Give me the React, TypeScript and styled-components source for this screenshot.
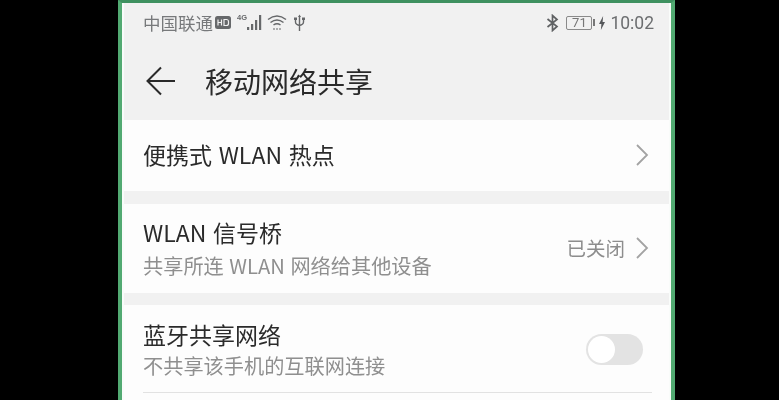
import styled, { createGlobalStyle } from "styled-components";

const GlobalStyle = createGlobalStyle`
    html, body {
        margin: 0;
        height: 100%;
        background: #000;
        overflow: hidden;
    }
`;

const Page = styled.div`
    width: 779px;
    height: 400px;
    overflow: hidden;
    background: #000;
    padding-left: 118px;
    box-sizing: border-box;
    font-family: "Noto Sans CJK SC", "Liberation Sans", sans-serif;
`;

const Phone = styled.div`
    width: 557px;
    height: 420px;
    box-sizing: border-box;
    border: solid #52aa72;
    border-top-color: #3f9160;
    border-width: 3px 4px 0 4px;
    display: flex;
    filter: blur(0.45px);
`;

const Screen = styled.div`
    flex: 1;
    min-width: 0;
    background: #f1f1f1;
    border: solid #f9fcfa;
    border-width: 0 2px;
    display: flex;
    flex-direction: column;
`;

const StatusBar = styled.div`
    height: 39px;
    padding: 0 15px 0 19px;
    display: flex;
    align-items: center;
    justify-content: space-between;
    color: #77797b;
    font-size: 17.5px;
`;

const StatusGroup = styled.div<{ $gap: number }>`
    display: flex;
    align-items: center;
    gap: ${(p) => p.$gap}px;
`;

const Carrier = styled.span`
    margin-right: -3px;
`;

const Clock = styled.span`
    font-family: "Roboto", "Liberation Sans", sans-serif;
    font-size: 17.5px;
    color: #6c6e70;
`;

const Battery = styled.span`
    width: 24px;
    height: 12px;
    border: 1px solid #8a8a8a;
    border-radius: 2px;
    font: 13px/12px "Roboto", "Liberation Sans", sans-serif;
    color: #777;
    text-align: center;
`;

const BatteryCap = styled.span`
    width: 2px;
    height: 7px;
    margin-left: -2px;
    margin-right: -1px;
    background: #777;
`;

const TitleBar = styled.div`
    height: 78px;
    padding-left: 22px;
    box-sizing: border-box;
    display: flex;
    align-items: center;
    gap: 29px;
`;

const Title = styled.h1`
    margin: 0;
    font-size: 28px;
    font-weight: 400;
    color: #2a2a2a;
`;

const Card = styled.div<{ $height: number; $gapBelow: number }>`
    height: ${(p) => p.$height}px;
    flex: none;
    background: #fdfdfd;
    padding: 0 20px 2px 19px;
    margin-bottom: ${(p) => p.$gapBelow}px;
    display: flex;
    align-items: center;
    justify-content: space-between;
    box-sizing: border-box;
`;

const LastCard = styled.div`
    flex: 1;
    background: #fdfdfd;
`;

const ToggleRow = styled.div`
    height: 87px;
    padding: 1px 26px 0 19px;
    box-sizing: border-box;
    display: flex;
    align-items: center;
    justify-content: space-between;
`;

const Divider = styled.div`
    height: 1px;
    margin: 0 17px 0 19px;
    background: #e2e2e2;
`;

const TextStack = styled.div<{ $gap: number; $top?: number }>`
    display: flex;
    flex-direction: column;
    gap: ${(p) => p.$gap}px;
    margin-top: ${(p) => p.$top ?? 0}px;
`;

const RowTitle = styled.div`
    font-size: 23px;
    line-height: 29px;
    word-spacing: 1.5px;
    color: #2b2b2b;
`;

const RowSub = styled.div`
    font-size: 20.2px;
    line-height: 27px;
    word-spacing: 1px;
    color: #8f8f8f;
`;

const RowEnd = styled.div`
    display: flex;
    align-items: center;
    gap: 10px;
    font-size: 19.5px;
    color: #8d8d8d;
`;

const Toggle = styled.div`
    width: 57px;
    height: 31px;
    border-radius: 16px;
    background: #e3e3e3;
    padding: 2px;
    box-sizing: border-box;
`;

const Knob = styled.div`
    width: 27px;
    height: 27px;
    border-radius: 50%;
    background: #fff;
`;

const Chevron = () => (
    <svg width="14" height="24" viewBox="0 0 14 24" fill="none" stroke="#a3a3a3" strokeWidth="1.8">
        <path d="M2 2 L12 12 L2 22" />
    </svg>
);

const HdBadge = () => (
    <svg width="16" height="13" viewBox="0 0 16 13">
        <rect width="16" height="13" rx="2.5" fill="#66686a" />
        <path d="M3 3.5v6M3 6.5h3.5M6.5 3.5v6M9 3.5v6h2.5a2 2 0 0 0 2-2v-2a2 2 0 0 0-2-2z" fill="none" stroke="#f1f1f1" strokeWidth="1.2" />
    </svg>
);

const Signal = () => (
    <svg width="26" height="19" viewBox="0 0 26 19" fill="#66686a">
        <text x="1" y="7" fontSize="7.5" fontFamily="Liberation Sans" fontWeight="700">4G</text>
        <rect x="11" y="14" width="2.2" height="3" />
        <rect x="15" y="11" width="2.2" height="6" />
        <rect x="19" y="7" width="2.2" height="10" />
        <rect x="23" y="2" width="2.2" height="15" />
    </svg>
);

const Wifi = () => (
    <svg width="22" height="17" viewBox="0 0 22 17" fill="none" stroke="#66686a" strokeWidth="1.5">
        <path d="M1 5.5 Q10 -1.5 19 5.5" />
        <path d="M3.5 8.5 Q10 3.5 16.5 8.5" />
        <path d="M6.5 11 Q10 8.5 13.5 11" />
        <path d="M6.5 15h1M9.5 15h1M12.5 15h1" strokeWidth="1.8" />
    </svg>
);

const Usb = () => (
    <svg width="11" height="18" viewBox="0 0 11 18" fill="none" stroke="#66686a" strokeWidth="1.4">
        <path d="M5.5 2v15M1.5 5v3q0 2.5 4 3.5q4-1 4-3.5V5" />
        <path d="M5.5 0.5l-1.5 2.5h3zM0 3.5h3v2.5H0zM8 3.5h3v2.5H8z" fill="#66686a" stroke="none" />
    </svg>
);

const Bluetooth = () => (
    <svg width="15" height="18" viewBox="0 0 15 18" fill="none" stroke="#5f6163" strokeWidth="1.7">
        <path d="M1.5 5 L11 12.5 L6.5 16.5 V1.5 L11 5.5 L1.5 13" />
    </svg>
);

const Bolt = () => (
    <svg width="6" height="14" viewBox="0 0 8 14" preserveAspectRatio="none" fill="#55575a">
        <path d="M5.5 0 L0 8 H3.2 L2.5 14 L8 6 H4.8 Z" />
    </svg>
);

const BackArrow = () => (
    <svg width="30" height="30" viewBox="0 0 30 30" fill="none" stroke="#2a2a2a" strokeWidth="2">
        <path d="M29 15 H2 M15 1.5 L1.5 15 L15 28.5" />
    </svg>
);

export default function App() {
    return (
        <Page>
            <GlobalStyle />
            <Phone>
                <Screen>
                    <StatusBar>
                        <StatusGroup $gap={5}>
                            <Carrier>中国联通</Carrier>
                            <HdBadge />
                            <Signal />
                            <Wifi />
                            <Usb />
                        </StatusGroup>
                        <StatusGroup $gap={5}>
                            <Bluetooth />
                            <StatusGroup $gap={3}>
                                <Battery>71</Battery>
                                <BatteryCap />
                            </StatusGroup>
                            <Bolt />
                            <Clock>10:02</Clock>
                        </StatusGroup>
                    </StatusBar>
                    <TitleBar>
                        <BackArrow />
                        <Title>移动网络共享</Title>
                    </TitleBar>
                    <Card $height={71} $gapBelow={13}>
                        <RowTitle>便携式 WLAN 热点</RowTitle>
                        <RowEnd><Chevron /></RowEnd>
                    </Card>
                    <Card $height={89} $gapBelow={12}>
                        <TextStack $gap={5} $top={2}>
                            <RowTitle>WLAN 信号桥</RowTitle>
                            <RowSub>共享所连 WLAN 网络给其他设备</RowSub>
                        </TextStack>
                        <RowEnd>已关闭<Chevron /></RowEnd>
                    </Card>
                    <LastCard>
                        <ToggleRow>
                            <TextStack $gap={3}>
                                <RowTitle>蓝牙共享网络</RowTitle>
                                <RowSub>不共享该手机的互联网连接</RowSub>
                            </TextStack>
                            <Toggle><Knob /></Toggle>
                        </ToggleRow>
                        <Divider />
                    </LastCard>
                </Screen>
            </Phone>
        </Page>
    );
}
